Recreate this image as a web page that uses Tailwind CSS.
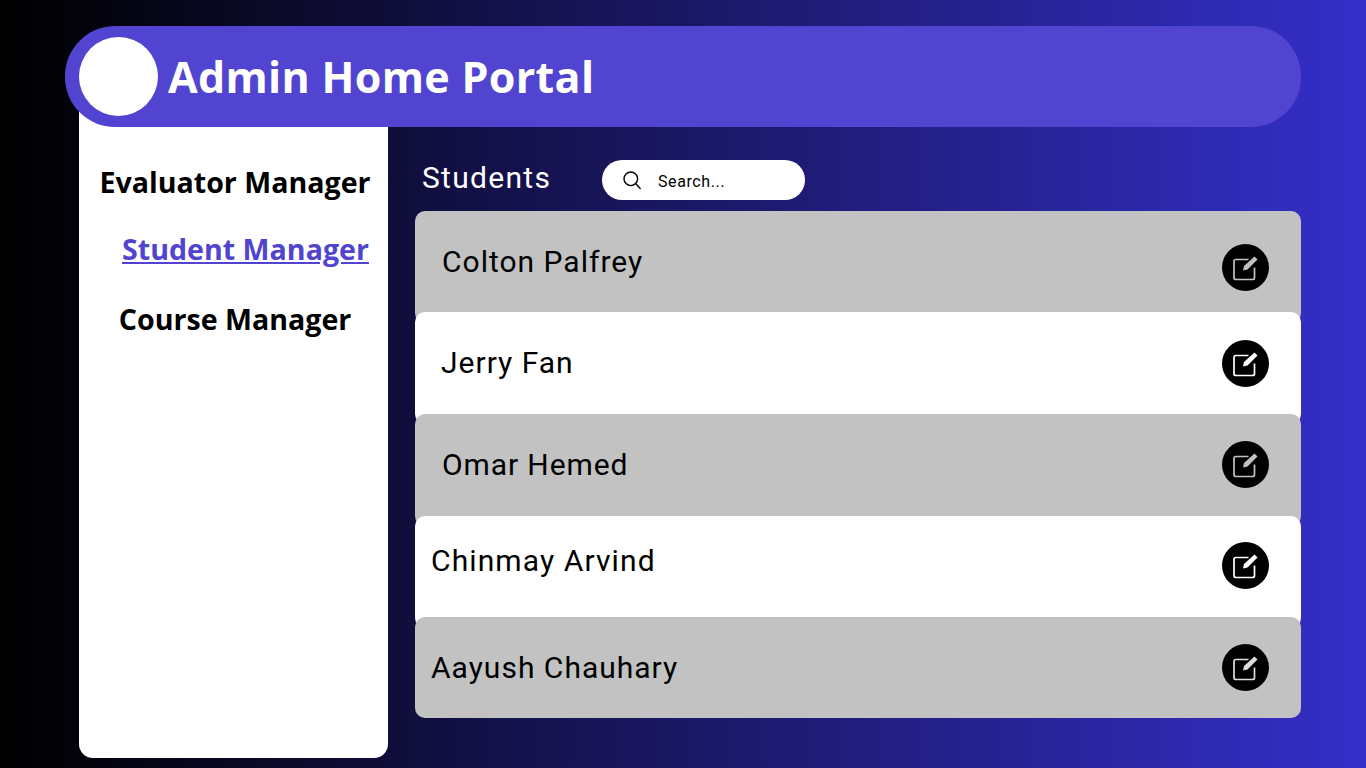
<!DOCTYPE html>
<html lang="en">
<head>
  <meta charset="UTF-8" />
  <meta name="viewport" content="width=device-width, initial-scale=1.0">
  <title>Admin Home Portal</title>
  <script src="https://cdn.jsdelivr.net/npm/@tailwindcss/browser@4"></script>
</head>
<body class="w-[1366px] h-[768px] overflow-hidden bg-[linear-gradient(90deg,#000000_0%,#342fc9_100%)] font-['Roboto',sans-serif] text-black">
  <div class="pt-[26px] pl-[65px] w-[1301px]">
    <!-- header -->
    <header class="relative z-10 h-[101px] rounded-[50px] bg-[#5044d0] flex items-center pl-[14px]">
      <div class="w-[79px] h-[79px] rounded-full bg-white"></div>
      <h1 class="ml-[10px] text-[43px] leading-none font-bold text-white font-['Open_Sans',sans-serif] tracking-[0.32px]">Admin Home Portal</h1>
    </header>

    <div class="flex pl-[14px]">
      <!-- sidebar -->
      <aside class="w-[309px] h-[648px] -mt-[17px] bg-white rounded-b-[14px] pt-[52px] flex flex-col items-center font-['Open_Sans',sans-serif]">
        <a class="ml-[3px] text-[28.6px] leading-[40px] font-bold">Evaluator Manager</a>
        <a class="mt-[27px] ml-[24px] text-[28.6px] leading-[40px] font-bold text-[#5044d0] underline">Student Manager</a>
        <a class="mt-[30px] ml-[3px] text-[28.6px] leading-[40px] font-bold">Course Manager</a>
      </aside>

      <main class="ml-[27px] w-[886px]">
        <div class="h-[84px] flex items-start pt-[33px]">
          <h2 class="ml-[7px] w-[128px] text-[30px] leading-[36px] text-white tracking-[1.3px]">Students</h2>
          <div class="ml-[52px] w-[203px] h-[40px] rounded-[20px] bg-white flex items-center pl-[20px]">
            <svg class="w-[20px] h-[20px]" viewBox="0 0 20 20" fill="none" stroke="#000" stroke-width="1.4" stroke-linecap="round">
              <circle cx="8.8" cy="8.8" r="6.8" />
              <path d="M13.8 13.8l4.4 4.6" />
            </svg>
            <span class="ml-[16px] mt-[4px] text-[16px] leading-none tracking-[0.6px]">Search...</span>
          </div>
        </div>

        <!-- rows, each one slides under the next -->
        <div class="flex flex-col">
          <div class="relative h-[112px] rounded-[10px] bg-[#c2c2c2] flex items-start">
            <span class="ml-[27px] mt-[30px] text-[30px] leading-[41px] tracking-[1px]">Colton Palfrey</span>
            <span class="absolute left-[807px] top-[33px] w-[47px] h-[47px] rounded-full bg-black flex items-center justify-center text-[#c2c2c2]">
              <svg class="w-[26px] h-[26px] -ml-px overflow-visible" viewBox="0 0 26 26" fill="none" stroke="currentColor" stroke-width="1.7"><path d="M16.5 4.500H4a2 2 0 0 0-2 2v16a2 2 0 0 0 2 2h16.500a2 2 0 0 0 2-2V12.500" /><path d="M11 15.500l1-4.500L22.500 1.500l3 3-10 10z" fill="currentColor" stroke="none" /></svg>
            </span>
          </div>
          <div class="relative -mt-[11px] h-[112px] rounded-[10px] bg-white flex items-start">
            <span class="ml-[26px] mt-[30px] text-[30px] leading-[41px] tracking-[1px]">Jerry Fan</span>
            <span class="absolute left-[807px] top-[28px] w-[47px] h-[47px] rounded-full bg-black flex items-center justify-center text-white">
              <svg class="w-[26px] h-[26px] -ml-px overflow-visible" viewBox="0 0 26 26" fill="none" stroke="currentColor" stroke-width="1.7"><path d="M16.5 4.500H4a2 2 0 0 0-2 2v16a2 2 0 0 0 2 2h16.500a2 2 0 0 0 2-2V12.500" /><path d="M11 15.500l1-4.500L22.500 1.500l3 3-10 10z" fill="currentColor" stroke="none" /></svg>
            </span>
          </div>
          <div class="relative -mt-[10px] h-[112px] rounded-[10px] bg-[#c2c2c2] flex items-start">
            <span class="ml-[27px] mt-[30px] text-[30px] leading-[41px] tracking-[0.9px]">Omar Hemed</span>
            <span class="absolute left-[807px] top-[27px] w-[47px] h-[47px] rounded-full bg-black flex items-center justify-center text-[#c2c2c2]">
              <svg class="w-[26px] h-[26px] -ml-px overflow-visible" viewBox="0 0 26 26" fill="none" stroke="currentColor" stroke-width="1.7"><path d="M16.5 4.500H4a2 2 0 0 0-2 2v16a2 2 0 0 0 2 2h16.500a2 2 0 0 0 2-2V12.500" /><path d="M11 15.500l1-4.500L22.500 1.500l3 3-10 10z" fill="currentColor" stroke="none" /></svg>
            </span>
          </div>
          <div class="relative -mt-[10px] h-[112px] rounded-[10px] bg-white flex items-start">
            <span class="ml-[16px] mt-[24px] text-[30px] leading-[41px] tracking-[1.1px]">Chinmay Arvind</span>
            <span class="absolute left-[807px] top-[26px] w-[47px] h-[47px] rounded-full bg-black flex items-center justify-center text-white">
              <svg class="w-[26px] h-[26px] -ml-px overflow-visible" viewBox="0 0 26 26" fill="none" stroke="currentColor" stroke-width="1.7"><path d="M16.5 4.500H4a2 2 0 0 0-2 2v16a2 2 0 0 0 2 2h16.500a2 2 0 0 0 2-2V12.500" /><path d="M11 15.500l1-4.500L22.500 1.500l3 3-10 10z" fill="currentColor" stroke="none" /></svg>
            </span>
          </div>
          <div class="relative -mt-[11px] h-[101px] rounded-[10px] bg-[#c2c2c2] flex items-start">
            <span class="ml-[16px] mt-[30px] text-[30px] leading-[41px] tracking-[1px]">Aayush Chauhary</span>
            <span class="absolute left-[807px] top-[27px] w-[47px] h-[47px] rounded-full bg-black flex items-center justify-center text-[#dedede]">
              <svg class="w-[26px] h-[26px] -ml-px overflow-visible" viewBox="0 0 26 26" fill="none" stroke="currentColor" stroke-width="1.7"><path d="M16.5 4.500H4a2 2 0 0 0-2 2v16a2 2 0 0 0 2 2h16.500a2 2 0 0 0 2-2V12.500" /><path d="M11 15.500l1-4.500L22.500 1.500l3 3-10 10z" fill="currentColor" stroke="none" /></svg>
            </span>
          </div>
        </div>
      </main>
    </div>
  </div>
</body>
</html>
